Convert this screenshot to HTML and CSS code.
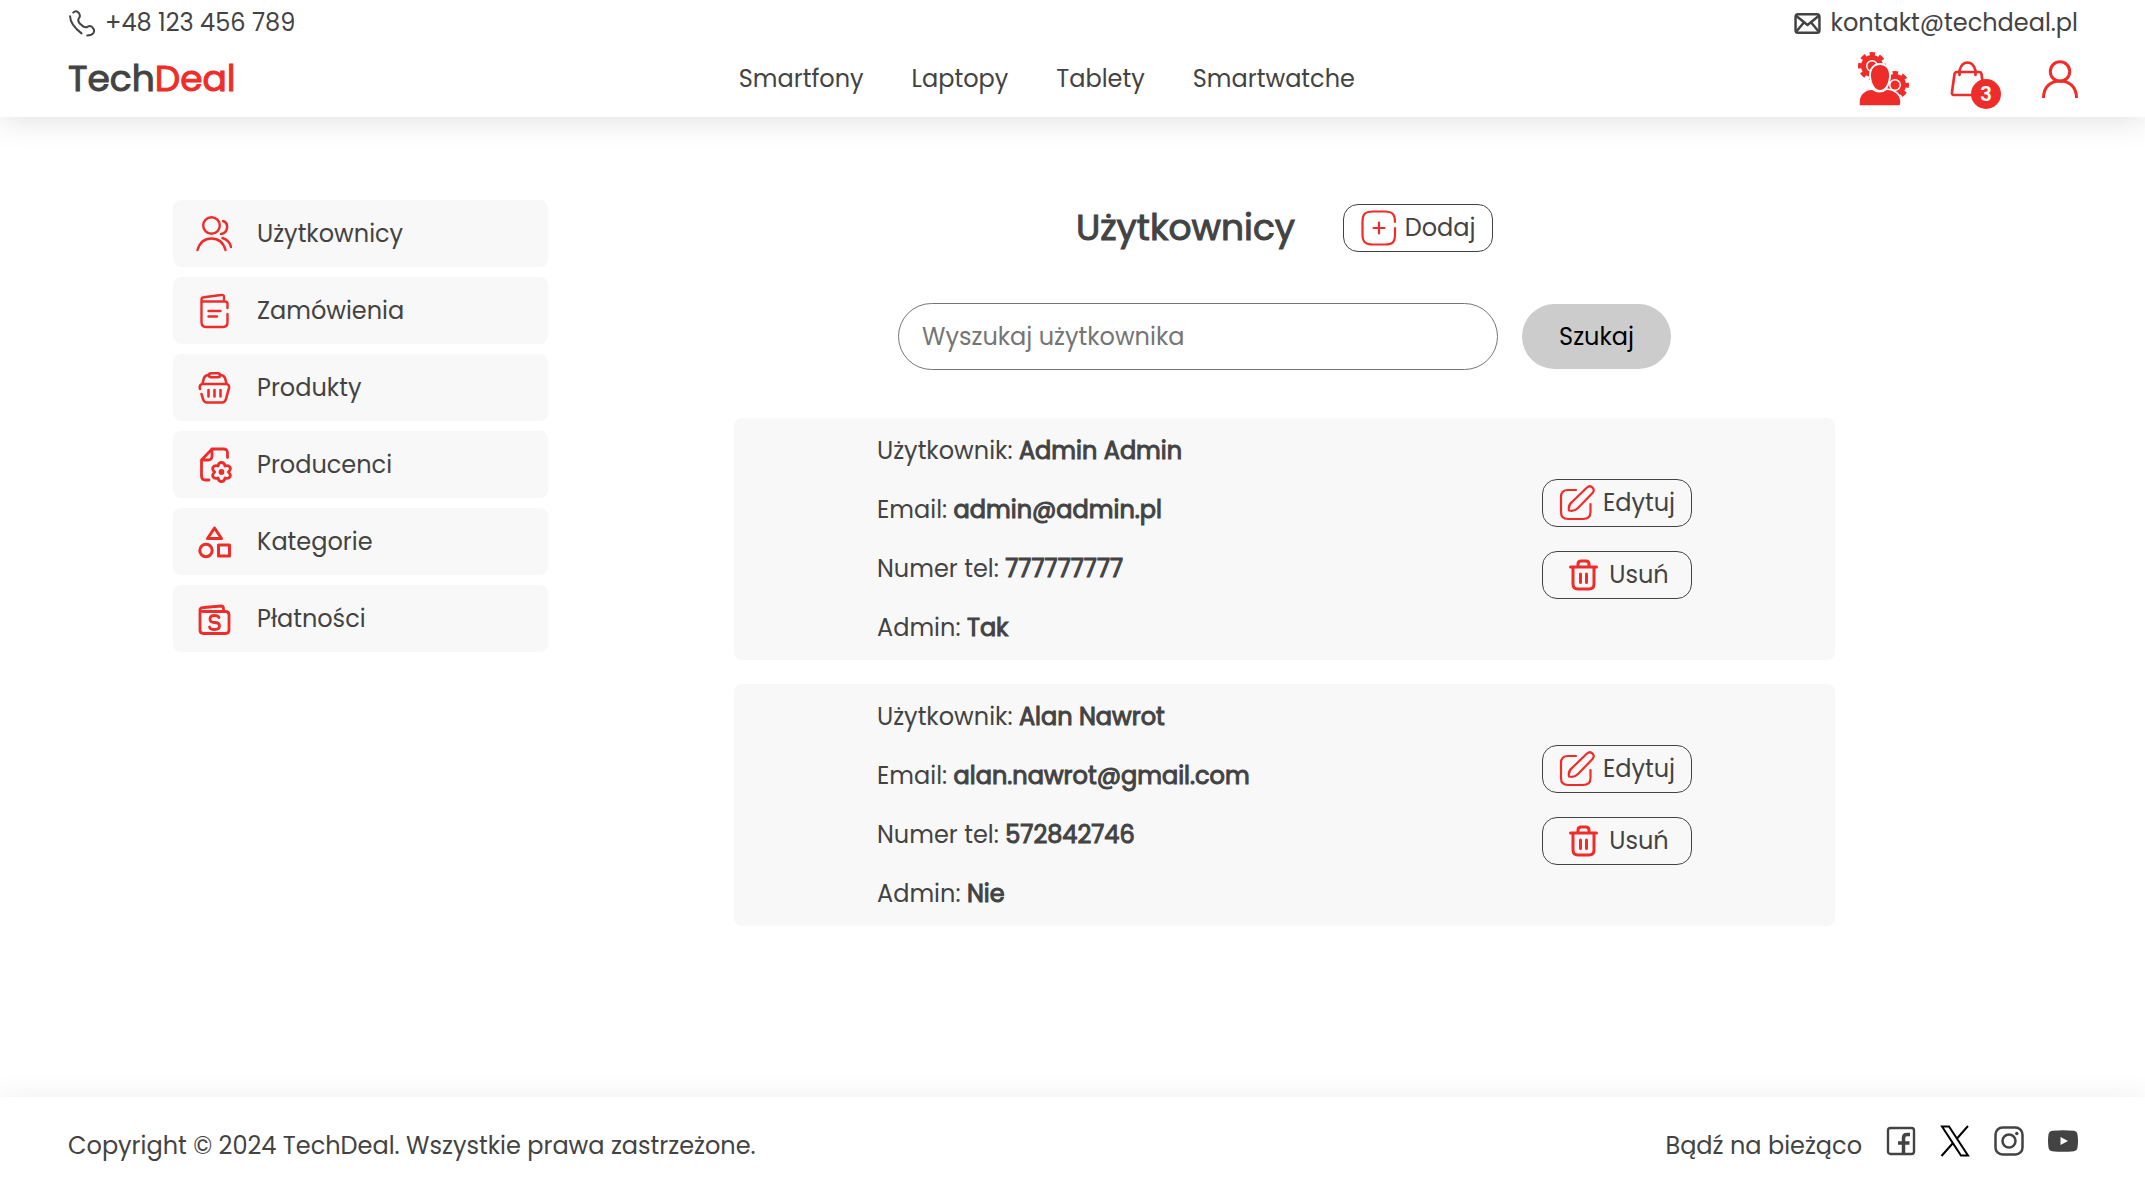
FILE: index.html
```html
<!DOCTYPE html>
<html lang="pl">
<head>
<meta charset="utf-8">
<meta name="viewport" content="width=device-width, initial-scale=1">
<title>TechDeal – Użytkownicy</title>
<link rel="stylesheet" href="styles.css">
</head>
<body>
<header class="header">
  <div class="contact">
    <a class="contact-link" href="tel:+48123456789">
      <svg class="icon-contact" viewBox="0 0 26 26" fill="none" stroke="currentColor" stroke-width="1.900" stroke-linecap="round"><path d="M13 22.500C6 17 2 11 2 6M5 2.500C7 .5 9 .8 10.500 3C12 5.500 12 6.500 10.500 8C9 10 10 12 13 14.500C15.500 17 17 17.500 19 16C21 15 23 15.500 24.500 18C26 21 24.500 24.500 18.500 24.500"/></svg>
      +48 123 456 789
    </a>
    <a class="contact-link" href="mailto:kontakt@techdeal.pl">
      <svg class="icon-contact" viewBox="0 0 26 26" fill="none" stroke="currentColor" stroke-width="2.400" stroke-linejoin="round"><rect x="1.500" y="4" width="23" height="18" rx="2.500"/><path d="M2 5.500L13 14.500L24 5.500M2.500 20.500L9.500 12M23.500 20.500L16.500 12"/></svg>
      kontakt@techdeal.pl
    </a>
  </div>
  <div class="bar">
    <a class="logo" href="#">Tech<span class="logo-accent">Deal</span></a>
    <nav class="nav">
      <a href="#">Smartfony</a>
      <a href="#">Laptopy</a>
      <a href="#">Tablety</a>
      <a href="#">Smartwatche</a>
    </nav>
    <div class="actions">
      <a class="action-admin" href="#" aria-label="Panel administratora">
        <svg width="52" height="54" viewBox="0 0 52 54" fill="currentColor">
          <g fill="none" stroke="currentColor"><circle cx="14" cy="14" r="8.500" stroke-width="5"/><circle cx="14" cy="14" r="12" stroke-width="4" stroke-dasharray="5.400 4.025" stroke-dashoffset="2.700"/><circle cx="37" cy="33" r="8.500" stroke-width="5"/><circle cx="37" cy="33" r="12" stroke-width="4" stroke-dasharray="5.400 4.025" stroke-dashoffset="2.700"/></g>
          <circle cx="14" cy="14" r="4.500"/><circle cx="37" cy="33" r="4.500"/>
          <path d="M1 54V50C1 42 7 37.500 14 37C18 40.500 25 40.500 29 37C36 37.500 43 42 43 50Q43 54 41 54H3Q1 54 1 54Z" stroke="#fff" stroke-width="1.500"/>
          <path d="M22 12C28.500 12 32.500 17 32 25C31.500 32 28 39 22 39S12.500 32 12 25C11.500 17 15.500 12 22 12Z" stroke="#fff" stroke-width="2"/>
        </svg>
      </a>
      <a class="action-cart" href="#" aria-label="Koszyk">
        <svg width="36" height="36" viewBox="0 0 36 36" fill="none" stroke="currentColor" stroke-width="2.700" stroke-linecap="round"><path d="M7 11H29Q31 11 31.500 13L34 31Q34.500 34 32 34H4Q1.500 34 2 31L4.500 13Q5 11 7 11ZM9.500 14V9.500C11 4 14 1.500 17.500 1.500S24 4 25.500 9.500V14"/></svg>
        <span class="badge">3</span>
      </a>
      <a class="action-user" href="#" aria-label="Konto">
        <svg width="36" height="38" viewBox="0 0 36 38" fill="none" stroke="currentColor" stroke-width="3"><circle cx="18" cy="11.500" r="9.700"/><path d="M1.500 38C1.500 27 8.500 21 18 21S34.500 27 34.500 38"/></svg>
      </a>
    </div>
  </div>
</header>

<div class="page">
  <aside>
    <nav class="menu">
      <a class="menu-item" href="#">
        <svg class="icon" viewBox="0 0 36 36" fill="none" stroke="currentColor" stroke-width="2.400" stroke-linecap="round"><circle cx="15.500" cy="9.500" r="8.300"/><path d="M1.500 34C4 25.500 9 22.500 15.500 22.500S27 25.500 29.500 34M27 5C30 6 31.500 8.500 31 12C30.500 15.500 28.500 17.500 25 18M26.500 22C31 23.500 34 26.500 35 31"/></svg>
        Użytkownicy
      </a>
      <a class="menu-item" href="#">
        <svg class="icon" viewBox="0 0 36 36" fill="none" stroke="currentColor" stroke-width="2.400" stroke-linecap="round" stroke-linejoin="round"><path d="M31.500 15V11Q31.500 8.500 29 8.500H7Q5.500 8.500 5.500 6.500T8 4.300L25 2Q28 1.500 28 4V8M5.500 7V29Q5.500 34 10 34H27Q31.500 34 31.500 29V21M12.500 18H24.500M12.500 23.500H21"/></svg>
        Zamówienia
      </a>
      <a class="menu-item" href="#">
        <svg class="icon" viewBox="0 0 36 36" fill="none" stroke="currentColor" stroke-width="2.600" stroke-linecap="round" stroke-linejoin="round"><rect x="13" y="3.200" width="11" height="4" rx="2"/><path d="M13 5Q9 5 8 8L6.500 13.500M24 5Q28 5 29 8L30.500 13.500M4 19Q3 14 7 14H30Q33.500 14 33 18L30 29Q29 32.500 26 32.500H11Q8 32.500 7 29L5.500 24M12.500 20V26.500M18.500 20V26.500M24.500 20V26.500"/></svg>
        Produkty
      </a>
      <a class="menu-item" href="#">
        <svg class="icon" viewBox="0 0 36 36" fill="none" stroke="currentColor" stroke-width="2.800" stroke-linecap="round" stroke-linejoin="round"><path d="M31.500 10.500V6Q31.500 2 27.500 2H16L5.500 13V29Q5.500 33 9.500 33H13M16 2V9Q16 13 12 13H6"/><path d="M25.500 15.500q3 0 3.500 3.500q3.500-1.200 5 1.200q1.200 2.500-1.700 4.800q2.900 2.300 1.700 4.800q-1.500 2.400-5 1.200q-.5 3.500-3.500 3.500t-3.500-3.500q-3.500 1.200-5-1.200q-1.200-2.500 1.700-4.800q-2.900-2.300-1.700-4.800q1.500-2.400 5-1.200q.5-3.500 3.500-3.500Z"/><circle cx="25.500" cy="25" r="1.500" fill="currentColor"/></svg>
        Producenci
      </a>
      <a class="menu-item" href="#">
        <svg class="icon" viewBox="0 0 36 36" fill="none" stroke="currentColor" stroke-width="3" stroke-linejoin="round"><path d="M18.500 4L25.500 14.500H11.500Z"/><circle cx="10" cy="26.500" r="6.200"/><rect x="22.500" y="21" width="11" height="11"/></svg>
        Kategorie
      </a>
      <a class="menu-item" href="#">
        <svg class="icon" viewBox="0 0 36 36" fill="none" stroke="currentColor" stroke-width="2.800" stroke-linecap="round" stroke-linejoin="round"><path d="M4 9V29Q4 32.500 7.500 32.500H29.500Q33 32.500 33 29V14Q33 10.500 29.500 10.500H8Q4 10.500 4 8.500T8 6.500L25 5Q27.500 5 27.500 7.500V10M23 16.500Q22 14.500 18.500 14.500Q14 14.500 14 18T18.500 21.500Q23.500 21.500 23.500 25T18.500 28.500Q14 28.500 13.500 26"/></svg>
        Płatności
      </a>
    </nav>
  </aside>

  <main class="content">
    <div class="title-row">
      <h1 class="title">Użytkownicy</h1>
      <button class="btn" type="button">
        <svg class="icon" viewBox="0 0 36 36" fill="none" stroke="currentColor" stroke-width="2.200" stroke-linecap="round"><path d="M34 12C34 4 31 1.500 24 1.500H12C4 1.500 1.500 4 1.500 12V24C1.500 32 4 34.500 12 34.500H24C32 34.500 34 32 34 24V18M18 12.500V23.500M12.500 18H23.500"/></svg>
        Dodaj
      </button>
    </div>
    <form class="search">
      <input class="search-input" type="search" placeholder="Wyszukaj użytkownika" aria-label="Wyszukaj użytkownika">
      <button class="search-btn" type="button">Szukaj</button>
    </form>
    <article class="card">
      <div class="details">
        <p>Użytkownik: <b>Admin Admin</b></p>
        <p>Email: <b>admin@admin.pl</b></p>
        <p>Numer tel: <b>777777777</b></p>
        <p>Admin: <b>Tak</b></p>
      </div>
      <div class="card-actions">
        <button class="btn" type="button">
          <svg class="icon" viewBox="0 0 36 36" fill="none" stroke="currentColor" stroke-width="2.200" stroke-linecap="round" stroke-linejoin="round"><path d="M17 5H9Q2 5 2 12V27Q2 34 9 34H24Q31.500 34 31.500 27V19M10 25.500Q9 20 13 17L28 2.500Q31 0 33.500 2.500T33.500 8L19 23Q15 27 10 25.500Z"/></svg>
          Edytuj
        </button>
        <button class="btn" type="button">
          <svg class="icon" viewBox="0 0 36 36" fill="none" stroke="currentColor" stroke-width="3" stroke-linecap="round" stroke-linejoin="round"><path d="M5.500 10H31.500M8 10V27Q8 32 13 32H24Q29 32 29 27V10M13 9.500V7Q13 4 16 4H21Q24 4 24 7V9.500M15.500 17V25.500M21.500 17V25.500"/></svg>
          Usuń
        </button>
      </div>
    </article>
    <article class="card">
      <div class="details">
        <p>Użytkownik: <b>Alan Nawrot</b></p>
        <p>Email: <b>alan.nawrot@gmail.com</b></p>
        <p>Numer tel: <b>572842746</b></p>
        <p>Admin: <b>Nie</b></p>
      </div>
      <div class="card-actions">
        <button class="btn" type="button">
          <svg class="icon" viewBox="0 0 36 36" fill="none" stroke="currentColor" stroke-width="2.200" stroke-linecap="round" stroke-linejoin="round"><path d="M17 5H9Q2 5 2 12V27Q2 34 9 34H24Q31.500 34 31.500 27V19M10 25.500Q9 20 13 17L28 2.500Q31 0 33.500 2.500T33.500 8L19 23Q15 27 10 25.500Z"/></svg>
          Edytuj
        </button>
        <button class="btn" type="button">
          <svg class="icon" viewBox="0 0 36 36" fill="none" stroke="currentColor" stroke-width="3" stroke-linecap="round" stroke-linejoin="round"><path d="M5.500 10H31.500M8 10V27Q8 32 13 32H24Q29 32 29 27V10M13 9.500V7Q13 4 16 4H21Q24 4 24 7V9.500M15.500 17V25.500M21.500 17V25.500"/></svg>
          Usuń
        </button>
      </div>
    </article>
  </main>
</div>

<footer class="footer">
  <p>Copyright © 2024 TechDeal. Wszystkie prawa zastrzeżone.</p>
  <div class="follow">
    <p>Bądź na bieżąco</p>
    <div class="socials">
      <a href="#" aria-label="Facebook"><svg width="30" height="32" viewBox="0 0 30 32" fill="none" stroke="currentColor"><rect x="2" y="3" width="26" height="26" rx="2.500" stroke-width="2.400"/><path d="M24 9.500H21Q17.500 9.500 17.500 13V29M12 18H23.500" stroke-width="3.500"/></svg></a>
      <a href="#" aria-label="X"><svg class="x-icon" width="30" height="32" viewBox="0 0 30 32" fill="none" stroke="currentColor" stroke-width="2"><path d="M2 1.500H9L28 30.500H21ZM28 1L17 13.500M13 18L1.500 31"/></svg></a>
      <a href="#" aria-label="Instagram"><svg width="30" height="32" viewBox="0 0 30 32" fill="none" stroke="currentColor" stroke-width="2.500"><rect x="1.500" y="2.500" width="27" height="27" rx="7"/><circle cx="15" cy="16" r="6.500"/><circle cx="22.800" cy="8.500" r="1" stroke-width="1.500" fill="currentColor"/></svg></a>
      <a href="#" aria-label="YouTube"><svg width="30" height="32" viewBox="0 0 30 32" fill="currentColor"><path fill-rule="evenodd" d="M4 5.800Q15 4.500 26 5.800Q29 6.300 29.500 9.500Q30.500 16 29.500 22.500Q29 25.700 26 26.200Q15 27.500 4 26.200Q1 25.700 .5 22.500Q-.5 16 .5 9.500Q1 6.300 4 5.800ZM12.500 12V20L20 16Z"/></svg></a>
    </div>
  </div>
</footer>
</body>
</html>
```
FILE: styles.css
```css
*,
*::before,
*::after {
  box-sizing: border-box;
}

:root {
  --red: #ee2d2b;
  --text: #434343;
  --panel: #f8f8f8;
}

body {
  display: flex;
  flex-direction: column;
  min-height: 100vh;
  margin: 0;
  background: #fff;
  color: var(--text);
  font: 400 24px/36px Poppins, Inter, sans-serif;
}

p,
h1 {
  margin: 0;
}

a {
  color: inherit;
  text-decoration: none;
}

svg {
  display: block;
  flex: none;
}

button,
input {
  font: inherit;
  color: inherit;
}

button {
  cursor: pointer;
}

.header {
  padding: 5px 67px 11px 68px;
  box-shadow: 0 0 32px rgba(0, 0, 0, 0.15);
}

.contact {
  display: flex;
  justify-content: space-between;
}

.contact-link {
  display: flex;
  align-items: center;
  gap: 10px;
}

.icon-contact {
  width: 27px;
  height: 27px;
}

.bar {
  display: flex;
  justify-content: space-between;
  align-items: center;
  height: 65px;
  padding-top: 11px;
}

.logo {
  font-size: 36px;
}

.logo,
.title,
.details b {
  font-weight: 400;
  -webkit-text-stroke: 1px currentColor;
}

.logo-accent {
  color: var(--red);
}

.nav {
  display: flex;
  gap: 48px;
}

.actions {
  display: flex;
  justify-content: flex-end;
  align-items: center;
  gap: 40px;
  color: var(--red);
}

.action-cart {
  position: relative;
}

.badge {
  position: absolute;
  left: 21px;
  top: 18px;
  width: 30px;
  height: 30px;
  border-radius: 50%;
  background: var(--red);
  color: #fff;
  font-size: 20px;
  font-weight: 600;
  line-height: 30px;
  text-align: center;
}

.action-user {
  margin-left: 16px;
}

.page {
  display: flex;
  flex: 1;
  gap: 186px;
  padding: 83px 173px;
}

.menu {
  display: flex;
  flex-direction: column;
  gap: 10px;
  width: 375px;
}

.menu-item {
  display: flex;
  align-items: center;
  gap: 25px;
  height: 67px;
  padding: 0 23px;
  border-radius: 8px;
  background: var(--panel);
}

.icon {
  width: 36px;
  height: 36px;
  color: var(--red);
}

.content {
  display: flex;
  flex: 1;
  flex-direction: column;
  gap: 24px;
  max-width: 1101px;
}

.title-row {
  display: flex;
  justify-content: center;
  align-items: center;
  gap: 48px;
  padding: 4px 0 27px;
}

.title {
  font-size: 36px;
  line-height: 48px;
}

.btn {
  display: flex;
  justify-content: center;
  align-items: center;
  gap: 8px;
  width: 150px;
  height: 48px;
  padding: 0;
  border: 1px solid var(--text);
  border-radius: 15px;
  background: transparent;
}

.search {
  display: flex;
  justify-content: center;
  align-items: center;
  gap: 24px;
  padding-bottom: 24px;
}

.search-input {
  width: 600px;
  height: 67px;
  padding: 0 23px;
  border: 1px solid #767676;
  border-radius: 34px;
  background: #fff;
}

.search-input::placeholder {
  color: #757575;
}

.search-btn {
  width: 149px;
  height: 65px;
  padding: 0;
  border: 0;
  border-radius: 33px;
  background: #ccc;
  color: #000;
}

.card {
  display: flex;
  justify-content: space-between;
  align-items: center;
  padding: 15px 143px;
  border-radius: 8px;
  background: var(--panel);
}

.details {
  display: flex;
  flex-direction: column;
  gap: 24px;
  line-height: 35px;
}

.card-actions {
  display: flex;
  flex-direction: column;
  gap: 24px;
}

.footer {
  display: flex;
  justify-content: space-between;
  align-items: center;
  height: 89px;
  padding: 8px 67px 0 68px;
  box-shadow: 0 0 32px rgba(0, 0, 0, 0.07);
}

.follow,
.socials {
  display: flex;
  align-items: center;
  gap: 24px;
}

.socials {
  padding-bottom: 10px;
}

.x-icon {
  color: #000;
}
```
